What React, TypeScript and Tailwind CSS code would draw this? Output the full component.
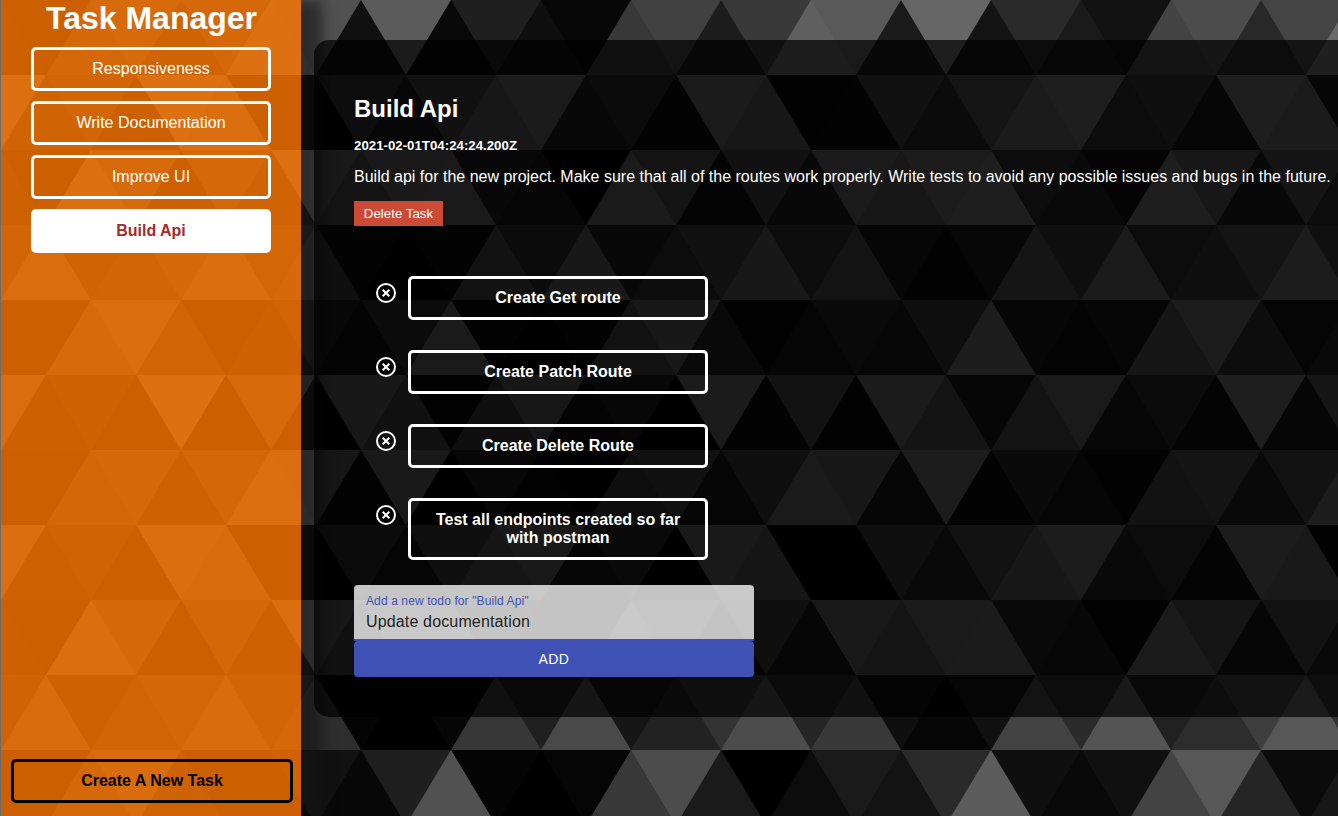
const TILE_COLS = 6;
const TILE_ROWS = 6;
const BASE = 90;
const ROW_H = 75;

// Each row holds [upward triangle, downward triangle] greys, left to right.
const SHADES: [number, number][][] = [
  [[27, 102], [20, 42], [26, 18], [67, 76], [40, 68], [106, 100]],
  [[13, 57], [37, 70], [90, 103], [40, 50], [23, 103], [93, 20]],
  [[77, 95], [100, 40], [33, 14], [100, 77], [27, 68], [40, 103]],
  [[64, 22], [13, 24], [73, 50], [91, 40], [52, 69], [94, 56]],
  [[26, 49], [99, 22], [16, 23], [74, 94], [44, 18], [30, 44]],
  [[8, 93], [68, 20], [64, 88], [25, 37], [14, 103], [22, 74]],
];

// The tiles get darker towards the left edge.
const TILE_SHIFT: Record<number, number> = { 0: 0, [-1]: -11, [-2]: -19 };

function grey(value: number) {
  const v = Math.max(0, Math.round(value));
  return `rgb(${v},${v},${v})`;
}

function TriangleBackdrop() {
  const downs = [];
  const ups = [];
  for (let row = 0; row < 11; row++) {
    const even = row % 2 === 0;
    const origin = even ? 901 : 856;
    const y = row * ROW_H;
    const tileY = Math.floor(row / TILE_ROWS);
    for (let col = -11; col <= 5; col++) {
      const x = origin + col * BASE;
      const tileX = Math.floor(col / TILE_COLS);
      const index = col - tileX * TILE_COLS;
      const [up, down] = SHADES[row % TILE_ROWS][index];
      const shift = TILE_SHIFT[tileX] - tileY * 7;
      downs.push(<rect key={`d${row}-${col}`} x={x} y={y} width={BASE} height={ROW_H} fill={grey(down + shift)} />);
      ups.push(
        <polygon
          key={`u${row}-${col}`}
          points={`${x},${y} ${x + 45},${y + ROW_H} ${x - 45},${y + ROW_H}`}
          fill={grey(up + shift)}
        />,
      );
    }
  }
  return (
    <svg className="absolute inset-0" width="1338" height="816" viewBox="0 0 1338 816" aria-hidden="true">
      {downs}
      {ups}
    </svg>
  );
}

const tasks = ["Responsiveness", "Write Documentation", "Improve UI", "Build Api"];
const todos = [
  "Create Get route",
  "Create Patch Route",
  "Create Delete Route",
  "Test all endpoints created so far with postman",
];

function RemoveIcon() {
  return (
    <svg width="24" height="24" viewBox="0 0 24 24" fill="none" stroke="#fff">
      <circle cx="12" cy="12" r="9" strokeWidth="2" />
      <path d="M8.7 8.7l6.6 6.6M15.3 8.7l-6.6 6.6" strokeWidth="2" />
    </svg>
  );
}

function Sidebar() {
  return (
    <aside className="flex h-full w-[300px] shrink-0 flex-col bg-[rgba(255,120,0,0.8)] shadow-[21px_0_12px_rgba(20,20,20,0.6)]">
      <h1 className="pl-px text-center text-[32px] leading-[37px] font-bold text-white">Task Manager</h1>
      <nav className="mt-[10px] flex flex-col items-center gap-[10px]">
        {tasks.map((task) => (
          <button
            key={task}
            className={
              task === "Build Api"
                ? "h-11 w-60 rounded-[5px] border-[3px] border-white bg-white text-base leading-[18px] font-bold text-[#a52a2a]"
                : "h-11 w-60 rounded-[5px] border-[3px] border-white text-base leading-[18px] text-white"
            }
          >
            {task}
          </button>
        ))}
      </nav>
      <button className="mt-auto mb-[13px] ml-[10px] h-11 w-[282px] rounded-[5px] border-[3px] border-black text-base leading-[18px] font-bold text-black">
        Create A New Task
      </button>
    </aside>
  );
}

export default function App() {
  return (
    <div className="relative h-[816px] w-[1338px] overflow-hidden bg-black font-['Liberation_Sans',Arial,sans-serif]">
      <TriangleBackdrop />
      <div className="relative flex h-full border-l border-[#6b6b6b]">
        <Sidebar />
        <main className="mt-[40px] ml-[13px] h-[677px] w-[1064px] shrink-0 rounded-[15px] bg-black/70 pt-[55px] pl-[40px] text-white">
          <h2 className="text-2xl leading-[28px] font-bold">Build Api</h2>
          <h5 className="mt-[15px] text-[13.28px] leading-[16px] font-bold">2021-02-01T04:24:24.200Z</h5>
          <p className="mt-[14px] text-base leading-[18px] whitespace-nowrap">
            Build api for the new project. Make sure that all of the routes work properly. Write tests to avoid any
            possible issues and bugs in the future.
          </p>
          <button className="mt-[15px] block h-[25px] w-[89px] bg-[#cc4b37] text-[13.33px] leading-[15px]">
            Delete Task
          </button>
          <ul className="mt-[50px] ml-[20px] flex flex-col gap-[30px]">
            {todos.map((todo) => (
              <li key={todo} className="flex items-start">
                <button className="mt-[5px]">
                  <RemoveIcon />
                </button>
                <div className="ml-[10px] w-[300px] rounded-[5px] border-[3px] border-white px-[10px] py-[10px] text-center text-base leading-[18px] font-bold">
                  {todo}
                </div>
              </li>
            ))}
          </ul>
          <form className="mt-[25px] w-[400px]">
            <div className="h-14 rounded-t-[4px] border-b-2 border-[#3f51b5] bg-[rgba(255,255,255,0.77)] px-3 pt-[9px]">
              <div className="text-xs leading-[14px] tracking-[0.11px] text-[#3f51b5]">
                Add a new todo for "Build Api"
              </div>
              <div className="mt-[4px] text-base leading-[19px] tracking-[0.15px] text-black/87">
                Update documentation
              </div>
            </div>
            <button
              type="button"
              className="block h-9 w-full rounded-[4px] bg-[#3f51b5] text-sm leading-[24px] tracking-[0.4px] text-white shadow-[0_2px_2px_rgba(0,0,0,0.2)]"
            >
              ADD
            </button>
          </form>
        </main>
      </div>
    </div>
  );
}
